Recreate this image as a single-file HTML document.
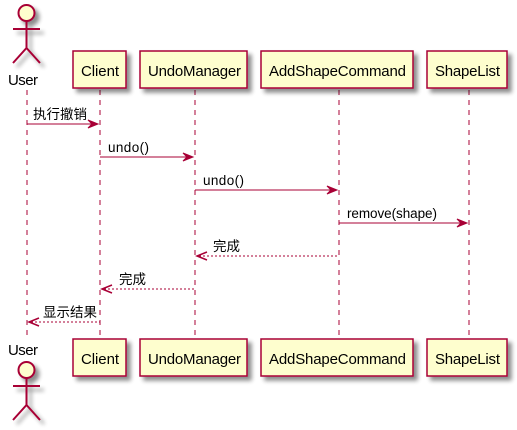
<!DOCTYPE html>
<html><head><meta charset="utf-8"><style>
html,body{margin:0;padding:0;background:#fff;}
svg{display:block;}
text{font-family:"Liberation Sans","Noto Sans CJK SC",sans-serif;fill:#000;}
</style></head><body>
<svg width="517" height="430" viewBox="0 0 517 430" xmlns="http://www.w3.org/2000/svg">
<defs>
<filter id="sh" x="-20%" y="-20%" width="150%" height="150%"><feGaussianBlur in="SourceAlpha" stdDeviation="2"/><feOffset dx="4" dy="4"/><feComponentTransfer><feFuncA type="linear" slope="0.45"/></feComponentTransfer><feMerge><feMergeNode/><feMergeNode in="SourceGraphic"/></feMerge></filter>
</defs>
<g stroke="#A80036" stroke-dasharray="5,5" stroke-width="1">
<line x1="27" y1="90" x2="27" y2="338"/>
<line x1="100" y1="90" x2="100" y2="338"/>
<line x1="195" y1="90" x2="195" y2="338"/>
<line x1="339" y1="90" x2="339" y2="338"/>
<line x1="469" y1="90" x2="469" y2="338"/>
</g>
<g fill="#FEFECE" stroke="#A80036" stroke-width="1.5" filter="url(#sh)">
<rect x="73" y="51" width="53" height="37"/>
<rect x="140" y="51" width="107" height="37"/>
<rect x="261" y="51" width="152" height="37"/>
<rect x="427" y="51" width="80" height="37"/>
<rect x="73" y="339" width="53" height="37"/>
<rect x="140" y="339" width="107" height="37"/>
<rect x="261" y="339" width="152" height="37"/>
<rect x="427" y="339" width="80" height="37"/>
</g>
<g font-size="15">
<text x="81" y="76" textLength="38">Client</text>
<text x="148" y="76" textLength="93">UndoManager</text>
<text x="269" y="76" textLength="137">AddShapeCommand</text>
<text x="435" y="76" textLength="65">ShapeList</text>
<text x="81" y="364" textLength="38">Client</text>
<text x="148" y="364" textLength="93">UndoManager</text>
<text x="269" y="364" textLength="137">AddShapeCommand</text>
<text x="435" y="364" textLength="65">ShapeList</text>
<text x="8" y="85" textLength="30">User</text>
<text x="8" y="355" textLength="30">User</text>
</g>
<g stroke="#A80036" stroke-width="2" fill="none" filter="url(#sh)">
<circle cx="26.5" cy="13" r="8" fill="#FEFECE"/>
<path d="M26.5 21V48M13 29H40M13 63L26.5 48L40 63"/>
<circle cx="26.5" cy="370" r="8" fill="#FEFECE"/>
<path d="M26.5 378V405M13 386H40M13 420L26.5 405L40 420"/>
</g>
<g stroke="#A80036" stroke-width="1" fill="none">
<line x1="27" y1="124" x2="98" y2="124"/>
<line x1="100" y1="157" x2="193" y2="157"/>
<line x1="195" y1="190" x2="337" y2="190"/>
<line x1="339" y1="223" x2="467" y2="223"/>
<line x1="199" y1="256" x2="339" y2="256" stroke-dasharray="2,2"/>
<line x1="104" y1="289" x2="195" y2="289" stroke-dasharray="2,2"/>
<line x1="31" y1="322" x2="100" y2="322" stroke-dasharray="2,2"/>
</g>
<g fill="#A80036" stroke="#A80036">
<path d="M88 120L98 124L88 128L92 124Z"/>
<path d="M183 153L193 157L183 161L187 157Z"/>
<path d="M327 186L337 190L327 194L331 190Z"/>
<path d="M457 219L467 223L457 227L461 223Z"/>
</g>
<g stroke="#A80036" stroke-width="1.5" fill="none">
<path d="M207 252L197 256L207 260"/>
<path d="M112 285L102 289L112 293"/>
<path d="M39 318L29 322L39 326"/>
</g>
<g font-size="13.5">
<text x="33" y="119">执行撤销</text>
<text x="108" y="152" textLength="41">undo()</text>
<text x="203" y="185" textLength="41">undo()</text>
<text x="347" y="218" textLength="90">remove(shape)</text>
<text x="213" y="251">完成</text>
<text x="119" y="284">完成</text>
<text x="43" y="317">显示结果</text>
</g>
</svg>
</body></html>
